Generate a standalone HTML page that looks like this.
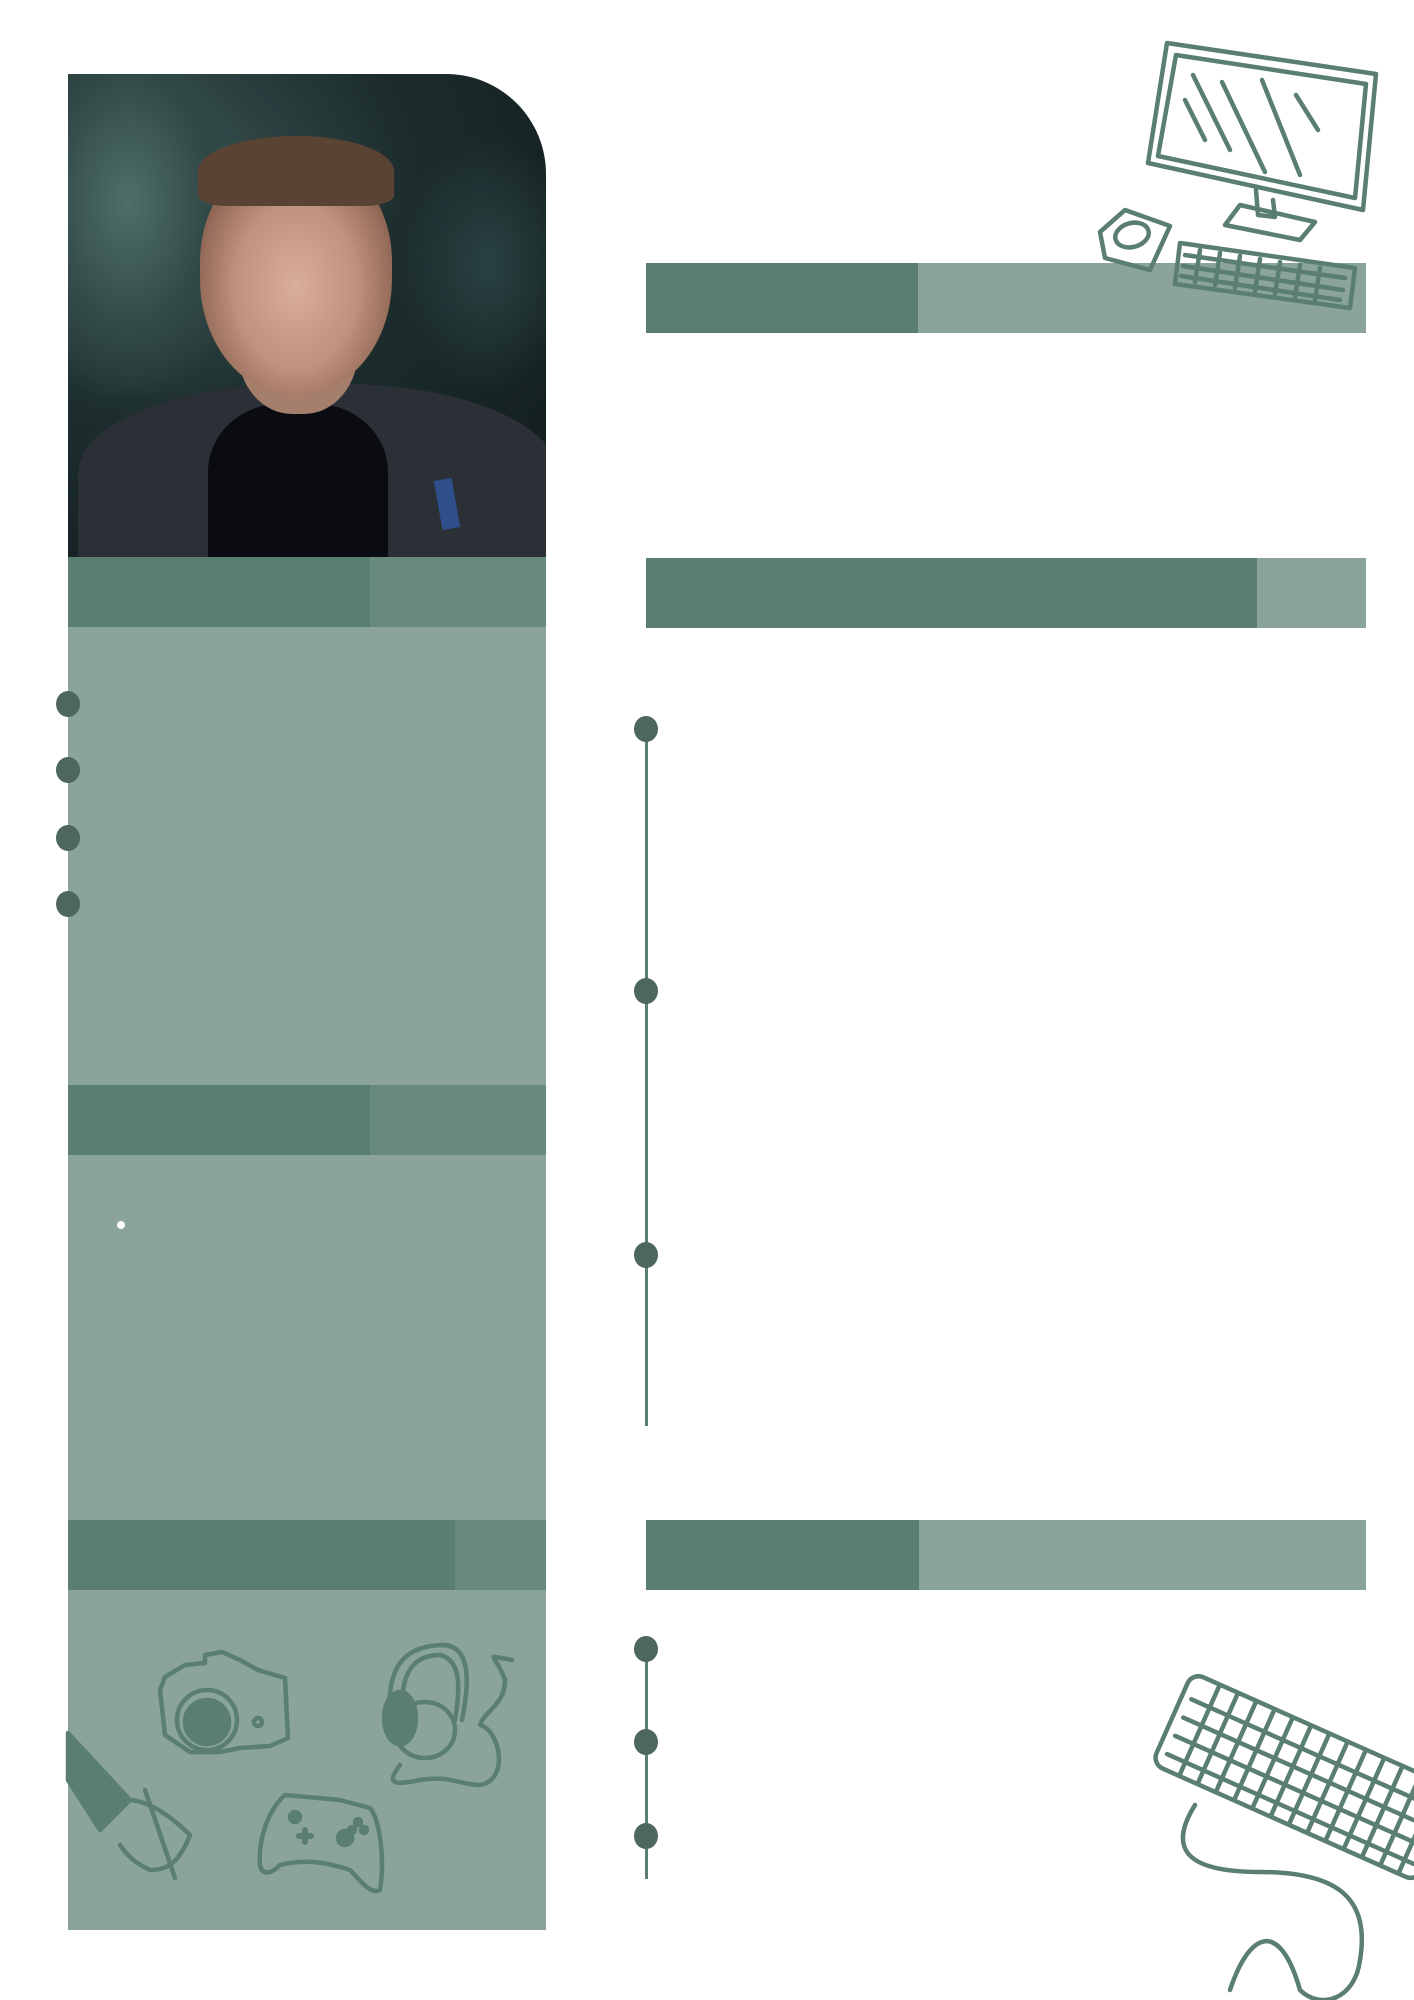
<!DOCTYPE html>
<html><head><meta charset="utf-8"><style>
html,body{margin:0;padding:0;background:#fff;}
body{width:1414px;height:2000px;position:relative;overflow:hidden;font-family:"Liberation Sans",sans-serif;}
.a{position:absolute;}
.d{background:#5a7f71;}
.m{background:#678a7d;}
.l{background:#8aa499;}
.dot{position:absolute;width:24px;height:26px;border-radius:50%;background:#4d6660;}
</style></head><body>
<!-- photo -->
<div class="a" style="left:68px;top:74px;width:478px;height:483px;border-top-right-radius:100px;overflow:hidden;background:radial-gradient(ellipse at 20% 25%,#3a5654 0%,#1d2d2e 45%,#101a1c 100%);">
  <div class="a" style="left:-20px;top:0;width:200px;height:320px;background:radial-gradient(ellipse at 40% 40%,#4f6e6a 0%,#2f4745 50%,transparent 75%);"></div>
  <div class="a" style="left:330px;top:60px;width:180px;height:260px;background:radial-gradient(ellipse at 50% 50%,#2a4242 0%,transparent 70%);"></div>
  <div class="a" style="left:10px;top:310px;width:480px;height:200px;border-radius:45% 45% 0 0;background:#2b3037;"></div>
  <div class="a" style="left:140px;top:330px;width:180px;height:170px;border-radius:40% 40% 0 0;background:#0b0c12;"></div>
  <div class="a" style="left:170px;top:200px;width:120px;height:140px;border-radius:40% 40% 45% 45%;background:#a57e6c;"></div>
  <div class="a" style="left:132px;top:80px;width:192px;height:240px;border-radius:45% 45% 48% 48%;background:radial-gradient(ellipse at 50% 55%,#d9ae98 0%,#c0917c 45%,#7d5646 85%);"></div>
  <div class="a" style="left:130px;top:62px;width:196px;height:70px;border-radius:50% 50% 15% 15%;background:#5b4333;"></div>
  <div class="a" style="left:370px;top:405px;width:18px;height:50px;background:#2e4f8c;transform:rotate(-10deg);"></div>
</div>
<!-- left bars/panels -->
<div class="a d" style="left:68px;top:557px;width:302px;height:70px;"></div>
<div class="a m" style="left:370px;top:557px;width:176px;height:70px;"></div>
<div class="a l" style="left:68px;top:627px;width:478px;height:458px;"></div>
<div class="a d" style="left:68px;top:1085px;width:302px;height:70px;"></div>
<div class="a m" style="left:370px;top:1085px;width:176px;height:70px;"></div>
<div class="a l" style="left:68px;top:1155px;width:478px;height:365px;"></div>
<div class="a d" style="left:68px;top:1520px;width:387px;height:70px;"></div>
<div class="a m" style="left:455px;top:1520px;width:91px;height:70px;"></div>
<div class="a l" style="left:68px;top:1590px;width:478px;height:340px;"></div>
<div class="dot" style="left:56px;top:691px;"></div>
<div class="dot" style="left:56px;top:757px;"></div>
<div class="dot" style="left:56px;top:825px;"></div>
<div class="dot" style="left:56px;top:891px;"></div>
<div class="a" style="left:117px;top:1221px;width:8px;height:8px;border-radius:50%;background:#fff;"></div>
<!-- right bars -->
<div class="a d" style="left:646px;top:263px;width:272px;height:70px;"></div>
<div class="a l" style="left:918px;top:263px;width:448px;height:70px;"></div>
<div class="a d" style="left:646px;top:558px;width:611px;height:70px;"></div>
<div class="a l" style="left:1257px;top:558px;width:109px;height:70px;"></div>
<div class="a d" style="left:646px;top:1520px;width:273px;height:70px;"></div>
<div class="a l" style="left:919px;top:1520px;width:447px;height:70px;"></div>
<!-- timelines -->
<div class="a" style="left:645px;top:729px;width:3px;height:697px;background:#5a7f71;"></div>
<div class="dot" style="left:634px;top:716px;"></div>
<div class="dot" style="left:634px;top:978px;"></div>
<div class="dot" style="left:634px;top:1242px;"></div>
<div class="a" style="left:645px;top:1649px;width:3px;height:230px;background:#5a7f71;"></div>
<div class="dot" style="left:634px;top:1636px;"></div>
<div class="dot" style="left:634px;top:1729px;"></div>
<div class="dot" style="left:634px;top:1823px;"></div>
<!-- doodles -->
<svg class="a" style="left:0;top:0" width="1414" height="2000" fill="none" stroke="#5a7f71" stroke-width="4.5" stroke-linecap="round" stroke-linejoin="round">
 <!-- monitor -->
 <path d="M1167 43 L1376 74 L1363 210 L1148 163 Z"/>
 <path d="M1176 55 L1366 84 L1355 198 L1158 156 Z"/>
 <path d="M1193 75 L1230 150 M1185 100 L1205 140 M1222 82 L1265 172 M1262 80 L1300 175 M1296 95 L1318 130"/>
 <path d="M1256 190 L1258 215 L1275 217 L1273 200 M1240 205 L1315 222 L1300 240 L1225 225 Z"/>
 <path d="M1100 232 L1125 210 L1170 226 L1150 270 L1105 258 Z"/>
 <ellipse cx="1132" cy="235" rx="17" ry="12" transform="rotate(-15 1132 235)"/>
 <path d="M1180 243 L1355 268 L1350 308 L1175 284 Z"/>
 <path d="M1185 255 L1345 278 M1183 266 L1343 290 M1181 276 L1340 300 M1200 250 L1195 282 M1220 253 L1215 285 M1240 256 L1235 288 M1260 259 L1255 291 M1280 262 L1275 294 M1300 265 L1295 297 M1320 268 L1315 300"/>
 <!-- bottom keyboard -->
 <g transform="rotate(24 1300 1775)">
  <rect x="1160" y="1725" width="290" height="100" rx="12"/>
  <path d="M1170 1750 H1440 M1170 1770 H1440 M1170 1790 H1440 M1170 1810 H1440 M1190 1727 V1823 M1210 1727 V1823 M1230 1727 V1823 M1250 1727 V1823 M1270 1727 V1823 M1290 1727 V1823 M1310 1727 V1823 M1330 1727 V1823 M1350 1727 V1823 M1370 1727 V1823 M1390 1727 V1823 M1410 1727 V1823 M1430 1727 V1823"/>
 </g>
 <path d="M1195 1805 C1170 1845 1180 1872 1260 1872 C1340 1872 1370 1900 1360 1960 C1355 2000 1320 2010 1300 1990 C1280 1920 1250 1930 1230 1990"/>
 <!-- camera -->
 <path d="M165 1677 L185 1665 L205 1663 L205 1655 L222 1652 L240 1660 L258 1670 L285 1678 L288 1738 L270 1746 L240 1748 L220 1752 L190 1752 L165 1735 L160 1690 Z"/>
 <circle cx="207" cy="1720" r="30"/><circle cx="207" cy="1722" r="22" fill="#5a7f71"/>
 <circle cx="258" cy="1722" r="4"/>
 <!-- headphones -->
 <path d="M390 1720 C385 1660 410 1645 445 1645 C470 1648 470 1680 462 1720"/>
 <path d="M402 1715 C400 1670 415 1655 440 1655 C462 1660 460 1690 455 1720"/>
 <ellipse cx="400" cy="1718" rx="16" ry="26" fill="#5a7f71"/>
 <ellipse cx="425" cy="1730" rx="30" ry="28"/>
 <path d="M400 1765 C385 1785 395 1785 420 1780 C450 1775 460 1785 480 1785 C510 1780 500 1730 480 1725 C485 1710 505 1705 505 1680 C500 1665 490 1655 495 1657 L512 1660"/>
 <!-- hand -->
 <path d="M68 1733 L68 1780 L100 1830 L130 1800 Z" fill="#5a7f71"/>
 <path d="M128 1800 C150 1800 175 1820 190 1835 C180 1860 170 1870 150 1870 C140 1865 130 1860 120 1845"/>
 <path d="M145 1790 L175 1878"/>
 <!-- gamepad -->
 <path d="M285 1795 L340 1800 L370 1808 C380 1820 385 1860 380 1890 C370 1895 360 1880 350 1870 C320 1860 300 1860 280 1865 C270 1875 262 1875 260 1865 C258 1840 268 1810 285 1795 Z"/>
 <circle cx="295" cy="1817" r="5" fill="#5a7f71"/><circle cx="345" cy="1838" r="7" fill="#5a7f71"/>
 <path d="M305 1830 V1842 M299 1836 H311" stroke-width="6"/>
 <circle cx="358" cy="1822" r="3" fill="#5a7f71"/><circle cx="364" cy="1830" r="3" fill="#5a7f71"/><circle cx="352" cy="1830" r="3" fill="#5a7f71"/>
</svg>
</body></html>
